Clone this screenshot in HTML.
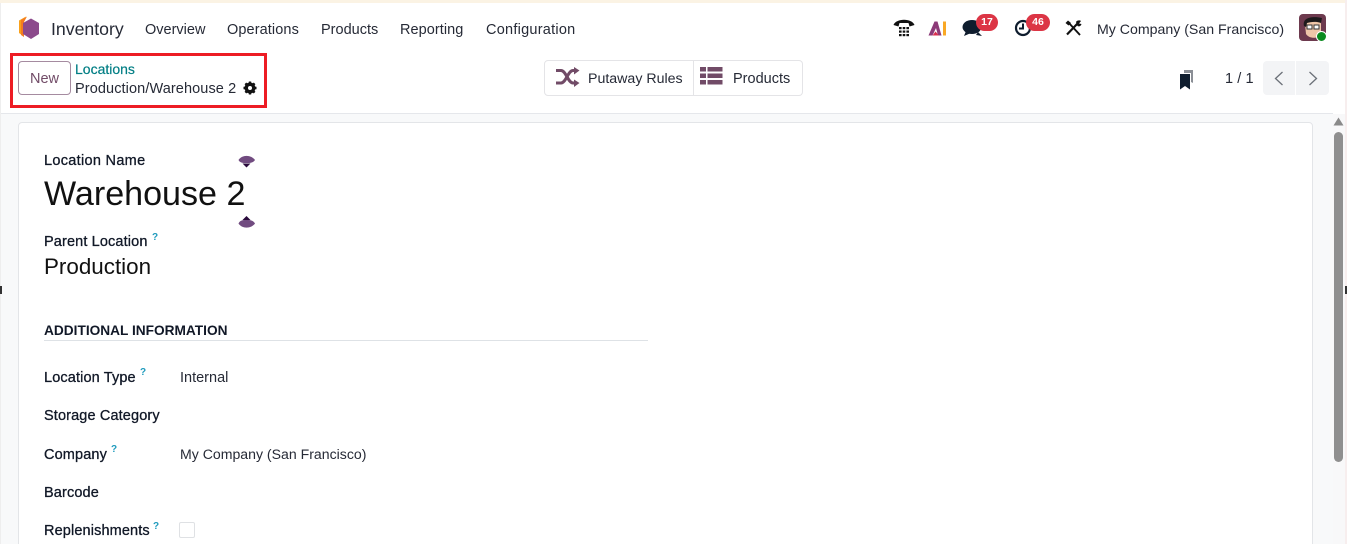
<!DOCTYPE html>
<html><head><meta charset="utf-8"><style>
html,body{margin:0;padding:0;width:1347px;height:544px;overflow:hidden;background:#fff}
body{position:relative;font-family:"Liberation Sans",sans-serif;color:#262a36;font-size:14.5px}
.t{position:absolute;white-space:nowrap;line-height:20px}
.b{font-weight:400;color:#111827;-webkit-text-stroke:.3px #111827;letter-spacing:.13px}
.q{position:absolute;color:#1f9bbd;font-size:10px;font-weight:700;line-height:12px}
svg{position:absolute;overflow:visible}
</style></head><body>
<div style="position:absolute;left:0;top:0;width:1347px;height:3px;background:#fbf3e4"></div>
<div style="position:absolute;left:0;top:3px;width:1px;height:541px;background:#eee"></div>
<div style="position:absolute;left:1345px;top:0;width:2px;height:544px;background:#f7eeee"></div>

<svg style="left:18px;top:16px" width="22" height="24" viewBox="0 0 22 24"><path d="M8 0.500L1 4.500V17L5 20V5Z" fill="#f9a11b"/><path d="M9 0.500L3 4V19L6 21V6Z" fill="#f47b20"/><path d="M13 2.500L21 7V18L13 23L5 18V7Z" fill="#8c4a8c"/></svg>
<div class="t" style="left:51px;top:19px;font-size:17.700px">Inventory</div>
<div class="t" style="left:145px;top:20px">Overview</div>
<div class="t" style="left:227px;top:20px;letter-spacing:.1px">Operations</div>
<div class="t" style="left:321px;top:20px">Products</div>
<div class="t" style="left:400px;top:20px;letter-spacing:.05px">Reporting</div>
<div class="t" style="left:486px;top:20px;letter-spacing:.25px">Configuration</div>

<svg style="left:893px;top:18px" width="22" height="20" viewBox="0 0 22 20"><path d="M0.500 7C3 0 19 0 21.500 7L16.500 8.500L15.500 5H6.500L5.500 8.500Z" fill="#111"/><g fill="#111"><rect x="6" y="9" width="2.600" height="2.200"/><rect x="9.700" y="9" width="2.600" height="2.200"/><rect x="13.400" y="9" width="2.600" height="2.200"/><rect x="6" y="12.500" width="2.600" height="2.200"/><rect x="9.700" y="12.500" width="2.600" height="2.200"/><rect x="13.400" y="12.500" width="2.600" height="2.200"/><rect x="6" y="16" width="2.600" height="2.200"/><rect x="9.700" y="16" width="2.600" height="2.200"/><rect x="13.400" y="16" width="2.600" height="2.200"/></g></svg>
<svg style="left:928px;top:21px" width="20" height="15" viewBox="0 0 20 15"><path d="M0.500 14.500L6.500 0.500H9.500L13.500 14.500H10L8 7L4.500 14.500Z" fill="#8c3a78"/><path d="M4.500 14.500L7.500 10.500L11 14.500Z" fill="#d9304f"/><rect x="15" y="0.500" width="3" height="14" fill="#f9a825"/></svg>
<svg style="left:962px;top:19px" width="22" height="18" viewBox="0 0 22 18"><ellipse cx="10" cy="8" rx="9.500" ry="7" fill="#0f1d2e"/><path d="M4 12L2 17L9 14Z" fill="#0f1d2e"/><path d="M16 13L20 17L14 16Z" fill="#0f1d2e"/></svg>
<div style="position:absolute;left:976px;top:14px;width:22px;height:17px;border-radius:9px;background:#dc3545;color:#fff;font-size:10.500px;font-weight:700;text-align:center;line-height:17px">17</div>
<svg style="left:1014px;top:19px" width="18" height="18" viewBox="0 0 18 18"><circle cx="9" cy="9" r="7" fill="none" stroke="#0f1d2e" stroke-width="2.200"/><path d="M9 4.500V9.500H5" fill="none" stroke="#0f1d2e" stroke-width="2"/></svg>
<div style="position:absolute;left:1026px;top:14px;width:24px;height:17px;border-radius:9px;background:#dc3545;color:#fff;font-size:10.500px;font-weight:700;text-align:center;line-height:17px">46</div>
<svg style="left:1065px;top:20px" width="17" height="16" viewBox="0 0 17 16"><path d="M3 2L15 15" stroke="#111" stroke-width="1.900"/><path d="M13 3L2 14.500" stroke="#111" stroke-width="2.200"/><path d="M0.500 3L3 0.500L6 3L3.500 5.500Z" fill="#111"/><path d="M11 2C12 0 15 0 16 1L14 3.500L16.500 4C16 6 14 7 12.500 6Z" fill="#111"/></svg>
<div class="t" style="left:1097px;top:19px;font-size:14.150px">My Company (San Francisco)</div>
<svg style="left:1299px;top:14px" width="29" height="29" viewBox="0 0 29 29"><rect width="27" height="27" rx="4" fill="#6d3a4e"/><path d="M6 10C6 4 22 4 22 10V20C20 25 10 25 7 20Z" fill="#efc6a8"/><path d="M5 12C3 3 14 2 23 4L22 9C17 7 11 8 8 9L7 13Z" fill="#1d1a1c"/><rect x="8" y="11" width="5" height="4" fill="#fff" stroke="#333"/><rect x="15" y="11" width="5" height="4" fill="#fff" stroke="#333"/><circle cx="22.500" cy="22.500" r="5" fill="#0a8a1f" stroke="#fff"/></svg>

<div style="position:absolute;left:10px;top:53px;width:251px;height:49px;border:3px solid #ed1c24"></div>
<div style="position:absolute;left:18px;top:61px;width:51px;height:32px;border:1px solid #a58ba0;border-radius:4px;text-align:center;line-height:35px;color:#714b67;font-size:14.500px">New</div>
<div class="t" style="left:75px;top:59px;color:#017e84;-webkit-text-stroke:.2px #017e84;font-size:14px">Locations</div>
<div class="t" style="left:75px;top:79px;letter-spacing:.1px">Production/Warehouse 2</div>
<svg style="left:243px;top:81px" width="14" height="14" viewBox="0 0 14 14"><circle cx="7" cy="7" r="4" fill="none" stroke="#111" stroke-width="3"/><path d="M7 0.500V13.500M0.500 7H13.500M2.400 2.400L11.600 11.600M11.600 2.400L2.400 11.600" stroke="#111" stroke-width="2.400"/><circle cx="7" cy="7" r="2" fill="#fff"/></svg>

<div style="position:absolute;left:544px;top:60px;width:148px;height:34px;border:1px solid #e4e4e7;border-radius:4px 0 0 4px"></div>
<div style="position:absolute;left:693px;top:60px;width:109px;height:34px;border:1px solid #e4e4e7;border-left:0;border-radius:0 4px 4px 0"></div>
<svg style="left:556px;top:67px" width="24" height="20" viewBox="0 0 24 20"><g fill="none" stroke="#714b67" stroke-width="3"><path d="M0 3.500H5C10 3.500 12 16 17 16H20"/><path d="M0 16H5C10 16 12 3.500 17 3.500H20"/></g><path d="M18 0L23.500 3.500L18 7.500Z M18 12.500L23.500 16L18 20Z" fill="#714b67"/></svg>
<div class="t" style="left:588px;top:69px;font-size:14.200px">Putaway Rules</div>
<svg style="left:700px;top:67px" width="23" height="18" viewBox="0 0 23 18" fill="#714b67"><rect width="6" height="4.500"/><rect x="7.500" width="15" height="4.500"/><rect y="6.500" width="6" height="4.500"/><rect x="7.500" y="6.500" width="15" height="4.500"/><rect y="13" width="6" height="4.500"/><rect x="7.500" y="13" width="15" height="4.500"/></svg>
<div class="t" style="left:733px;top:69px">Products</div>

<svg style="left:1179px;top:69px" width="16" height="21" viewBox="0 0 16 21"><path d="M5 1H14V14L12 13V4H5Z" fill="#8b8f96"/><path d="M1 5H11V20.500L6 17L1 20.500Z" fill="#0f1d2e"/></svg>
<div class="t" style="left:1225px;top:69px;letter-spacing:.1px">1 / 1</div>
<div style="position:absolute;left:1263px;top:61px;width:32px;height:34px;background:#f3f4f6;border-radius:4px 0 0 4px"></div>
<div style="position:absolute;left:1296px;top:61px;width:33px;height:34px;background:#f3f4f6;border-radius:0 4px 4px 0"></div>
<svg style="left:1274px;top:71px" width="10" height="15"><path d="M8.500 1L1.500 7.500L8.500 14" fill="none" stroke="#6b7078" stroke-width="1.300"/></svg>
<svg style="left:1308px;top:71px" width="10" height="15"><path d="M1.500 1L8.500 7.500L1.500 14" fill="none" stroke="#6b7078" stroke-width="1.300"/></svg>

<div style="position:absolute;left:1px;top:113px;width:1332px;height:431px;background:#f8f9fa;border-top:1px solid #e5e7eb"></div>
<div style="position:absolute;left:18px;top:122px;width:1293px;height:430px;background:#fff;border:1px solid #e3e5e8;border-radius:4px"></div>

<div style="position:absolute;left:1333px;top:114px;width:12px;height:430px;background:#f8f8f9"></div>
<svg style="left:1333px;top:117px" width="11" height="9"><path d="M5.500 0.500L10.500 8.500H0.500Z" fill="#8a8a8a"/></svg>
<div style="position:absolute;left:1334px;top:132px;width:9px;height:330px;background:#8f8f8f;border-radius:5px"></div>
<div style="position:absolute;left:0;top:286px;width:2px;height:8px;background:#333"></div>
<div style="position:absolute;left:1345px;top:286px;width:2px;height:8px;background:#333"></div>

<div class="t b" style="left:44px;top:151px;letter-spacing:.3px">Location Name</div>
<div class="t" style="left:44px;top:172px;font-size:34.100px;line-height:44px;color:#111">Warehouse 2</div>
<svg style="left:238px;top:155px" width="18" height="13"><path d="M0.500 5C4 -0.500 13 -0.500 17 5C15 8 12 8 8.500 8C5 8 2 8 0.500 5Z" fill="#714b80"/><path d="M4.500 8.500H12.500L8.500 12.500Z" fill="#2a0a3c"/></svg>
<svg style="left:238px;top:215px" width="18" height="14"><path d="M4.500 5H12.500L8.500 1Z" fill="#2a0a3c"/><path d="M0.500 8.500C4 14 13 14 17 8.500C15 5 12 5 8.500 5C5 5 2 5 0.500 8.500Z" fill="#714b80"/></svg>

<div class="t b" style="left:44px;top:232px">Parent Location</div><div class="q" style="left:152px;top:232px">?</div>
<div class="t" style="left:44px;top:253px;font-size:22.400px;line-height:28px;color:#111">Production</div>

<div class="t" style="left:44px;top:321px;font-weight:700;color:#111827;font-size:13.700px">ADDITIONAL INFORMATION</div>
<div style="position:absolute;left:44px;top:340px;width:604px;height:1px;background:#dee2e6"></div>

<div class="t b" style="left:44px;top:368px">Location Type</div><div class="q" style="left:140px;top:367px">?</div>
<div class="t" style="left:180px;top:368px">Internal</div>
<div class="t b" style="left:44px;top:406px">Storage Category</div>
<div class="t b" style="left:44px;top:445px">Company</div><div class="q" style="left:111px;top:444px">?</div>
<div class="t" style="left:180px;top:444px;font-size:14.100px">My Company (San Francisco)</div>
<div class="t b" style="left:44px;top:483px">Barcode</div>
<div class="t b" style="left:44px;top:521px">Replenishments</div><div class="q" style="left:153px;top:521px">?</div>
<div style="position:absolute;left:179px;top:522px;width:14px;height:14px;border:1px solid #dfe1e4;border-radius:2px"></div>
</body></html>
